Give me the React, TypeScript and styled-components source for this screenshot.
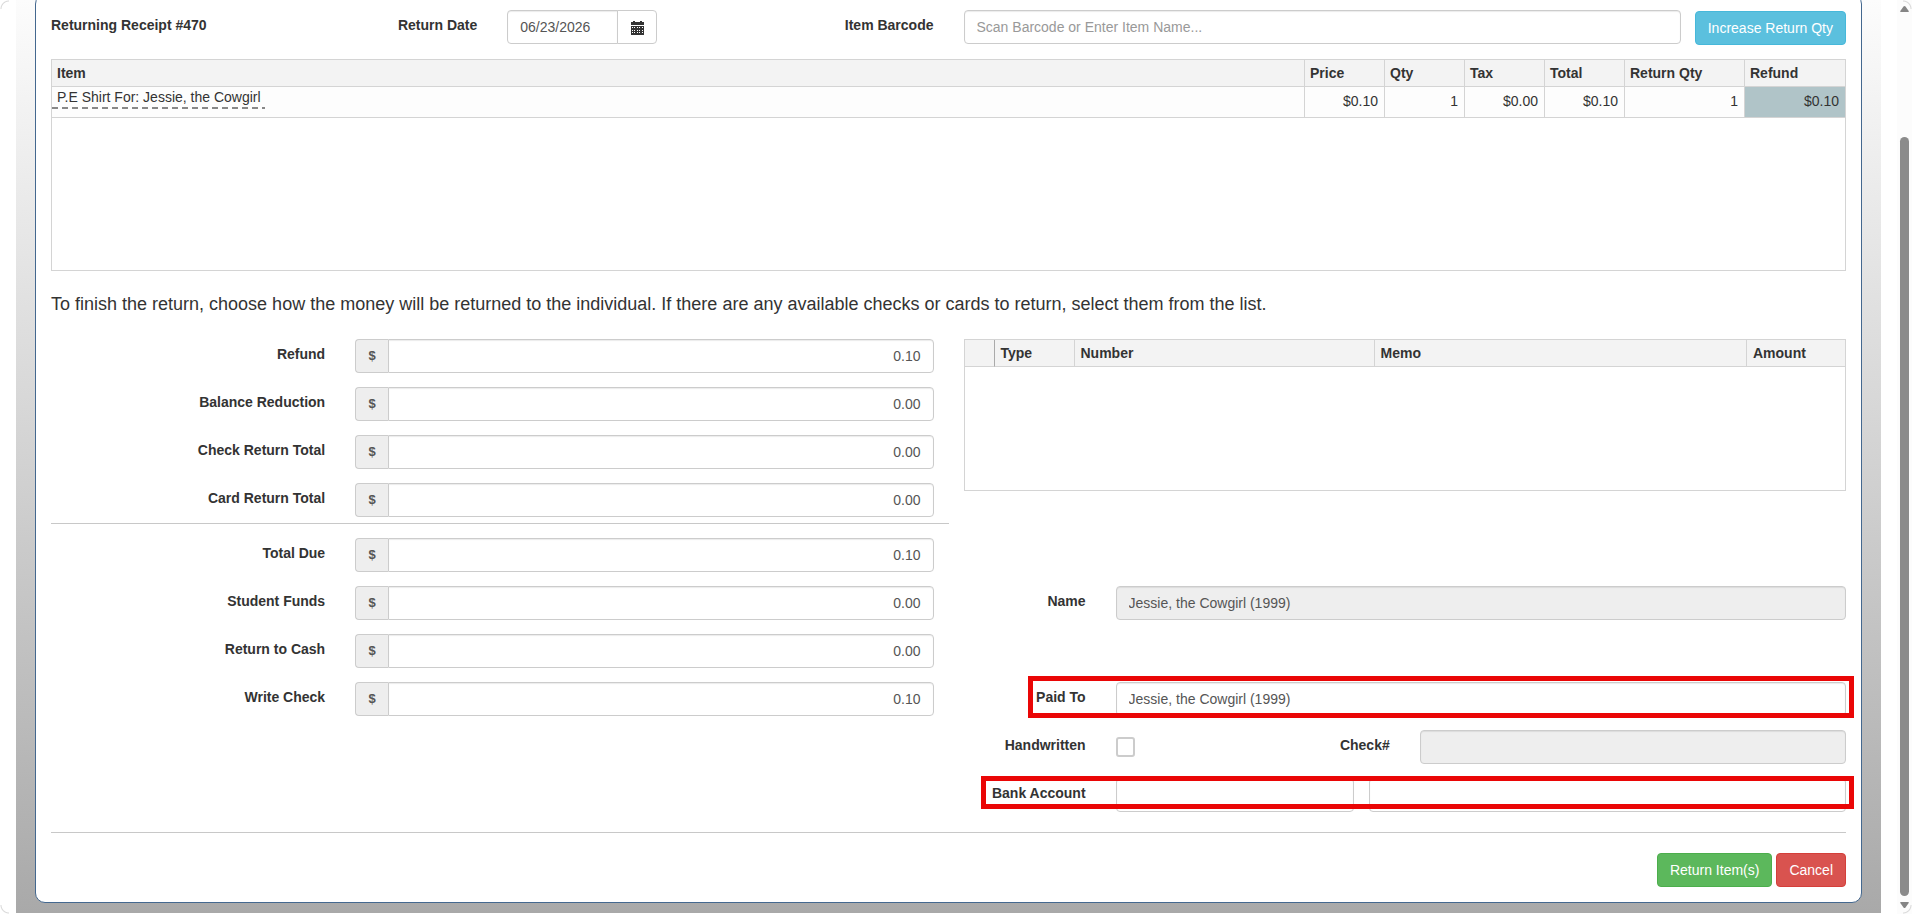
import React from "react";
import styled, { createGlobalStyle, css } from "styled-components";

const GlobalStyle = createGlobalStyle`
  * { box-sizing: border-box; }
  body {
    margin: 0;
    background: #fff;
    color: #333;
    font-family: "Liberation Sans", Arial, sans-serif;
    font-size: 14px;
    line-height: 20px;
  }
  input, button { font: inherit; }
`;

const corner = (x: string, y: string) =>
  `radial-gradient(circle at ${x} ${y}, transparent 7px, #d8d8d8 8px, transparent 9px) no-repeat`;

const Shell = styled.div`
  position: relative;
  display: flex;
  min-height: 100vh;
  overflow: hidden;
  &::after {
    content: "";
    position: absolute;
    inset: 0;
    pointer-events: none;
    background:
      ${corner("9px", "9px")} 0 0 / 9px 9px,
      ${corner("0", "9px")} 100% 0 / 9px 9px,
      ${corner("9px", "0")} 0 100% / 9px 9px,
      ${corner("0", "0")} 100% 100% / 9px 9px;
  }
`;

const Backdrop = styled.div`
  flex: 1;
  min-width: 0;
  margin: 0 16px 1px;
  padding: 0 19px 10px;
  background: linear-gradient(#fcfcfc, #a9a9a9);
`;

const Panel = styled.main`
  margin-top: -6px;
  padding: 15px 0;
  border: 1px solid #44688f;
  border-radius: 10px;
  background: #fff;
`;

const TopBar = styled.div`
  display: grid;
  grid-template-columns: 1fr 1fr 2fr 4fr;
  align-items: start;
`;

const BarCell = styled.div<{ $end?: boolean }>`
  display: flex;
  justify-content: ${(p) => (p.$end ? "flex-end" : "flex-start")};
  gap: 14px;
  padding: 0 15px;
  white-space: nowrap;
`;

const labelText = css`
  padding-top: 5px;
  font-weight: 700;
`;

const BarTitle = styled.strong`
  ${labelText}
`;

const Label = styled.label`
  ${labelText}
  text-align: right;
  white-space: nowrap;
`;

const BarcodeLabel = styled(Label)`
  flex: 1;
`;

const Input = styled.input`
  flex: 1;
  width: 100%;
  min-width: 0;
  height: 34px;
  padding: 6px 12px;
  border: 1px solid #ccc;
  border-radius: 4px;
  background: #fff;
  box-shadow: inset 0 1px 1px rgba(0, 0, 0, 0.08);
  color: #555;
  outline: 0;
  &::placeholder { color: #999; opacity: 1; }
  &:disabled { background: #eee; }
`;

const DateGroup = styled.div`
  display: flex;
  width: 150px;
  ${Input} { border-radius: 4px 0 0 4px; }
`;

const DateButton = styled.button`
  display: flex;
  align-items: center;
  justify-content: center;
  width: 40px;
  height: 34px;
  margin-left: -1px;
  padding: 2px 0 0;
  border: 1px solid #ccc;
  border-radius: 0 4px 4px 0;
  background: #fff;
  color: #333;
`;

const tones = {
  info: ["#5bc0de", "#46b8da"],
  success: ["#5cb85c", "#4cae4c"],
  danger: ["#d9534f", "#d43f3a"],
};

const Button = styled.button<{ $tone: keyof typeof tones }>`
  height: 34px;
  padding: 6px 12px;
  border: 1px solid ${(p) => tones[p.$tone][1]};
  border-radius: 4px;
  background: ${(p) => tones[p.$tone][0]};
  color: #fff;
  white-space: nowrap;
`;

const IncreaseButton = styled(Button)`
  margin-top: 1px;
`;

const GridBox = styled.div<{ $height: number }>`
  min-height: ${(p) => p.$height}px;
  border: 1px solid #d4d4d4;
`;

const Table = styled.table<{ $inset?: number }>`
  width: 100%;
  table-layout: fixed;
  border-collapse: separate;
  border-spacing: 0;
  th { padding: 0 ${(p) => p.$inset ?? 5}px; }
`;

const Th = styled.th<{ $w?: number; $dark?: boolean }>`
  ${(p) => p.$w && `width: ${p.$w}px;`}
  height: 27px;
  border-right: 1px solid ${(p) => (p.$dark ? "#aaa" : "#d4d4d4")};
  border-bottom: 1px solid #d4d4d4;
  background: #f3f3f3;
  text-align: left;
  &:last-child { border-right: 0; }
`;

const Td = styled.td<{ $mark?: boolean }>`
  height: 31px;
  padding: 0 6px 2px;
  border-right: 1px solid #d4d4d4;
  border-bottom: 1px solid #d4d4d4;
  background: ${(p) => (p.$mark ? "#b0c4c8" : "#fdfdfd")};
  text-align: right;
  &:last-child { border-right: 0; }
`;

const ItemTd = styled(Td)`
  padding: 0;
  text-align: left;
  vertical-align: top;
`;

const ItemName = styled.span`
  display: inline-block;
  padding: 0 4px 2px 5px;
  line-height: 19px;
  background: repeating-linear-gradient(90deg, #888 0 6px, transparent 6px 10px) left bottom / 100% 2px no-repeat;
`;

const ItemsArea = styled.section`
  margin: 14px 15px 0;
`;

const Note = styled.p`
  margin: 20px 15px 22px;
  font-size: 18px;
  line-height: 26px;
`;

const Halves = styled.div`
  display: grid;
  grid-template-columns: 1fr 1fr;
`;

const Stack = styled.div`
  display: flex;
  flex-direction: column;
  gap: 14px;
`;

const AmountRow = styled.div`
  display: grid;
  grid-template-columns: 1fr 2fr;
  > * { margin: 0 15px; }
`;

const Money = styled.div`
  display: flex;
  ${Input} {
    border-radius: 0 4px 4px 0;
    text-align: right;
  }
`;

const Currency = styled.span`
  width: 33px;
  padding: 6px 0;
  border: 1px solid #ccc;
  border-right: 0;
  border-radius: 4px 0 0 4px;
  background: #eee;
  color: #555;
  font-size: 13px;
  font-weight: 700;
  text-align: center;
`;

const Rule = styled.hr<{ $kind: "half" | "full" }>`
  height: 0;
  border: 0;
  border-top: 1px solid #c8c8c8;
  margin: ${(p) => (p.$kind === "half" ? "6px 0 14px 15px" : "20px 15px")};
`;

const PayColumn = styled.div`
  display: flex;
  flex-direction: column;
`;

const ChecksArea = styled.section`
  margin: 0 15px 95px;
`;

const PayRow = styled.div`
  position: relative;
  display: grid;
  grid-template-columns: 1fr 5fr;
  min-height: 34px;
  > * { margin: 0 15px; }
`;

const Spacer = styled.div`
  height: 34px;
`;

const CheckRow = styled.div`
  display: grid;
  grid-template-columns: 1fr 1fr 1fr 3fr;
  > * { margin: 0 15px; }
`;

const PayInput = styled(Input)`
  width: auto;
`;

const Tick = styled.input`
  appearance: none;
  width: 19px;
  height: 20px;
  margin: 7px 0 0;
  border: 2px solid #ccc;
  border-radius: 3px;
  background: #fff;
`;

const TickCell = styled.div`
  display: flex;
  align-items: flex-start;
`;

const BankFields = styled.div`
  display: grid;
  grid-template-columns: 1fr 2fr;
  gap: 15px;
`;

const Highlight = styled.div<{ $area: "payee" | "bank" }>`
  position: absolute;
  right: 7px;
  margin: 0;
  border: 5px solid #ea0606;
  pointer-events: none;
  ${(p) =>
    p.$area === "payee"
      ? "top: -6px; left: 79px; height: 42px;"
      : "top: -2px; left: 32px; height: 33px;"}
`;

const Actions = styled.div`
  display: flex;
  justify-content: flex-end;
  gap: 4px;
  padding: 0 15px;
`;

const ScrollTrack = styled.div`
  display: flex;
  flex-direction: column;
  align-items: center;
  width: 15px;
  padding: 5px 0;
  background: #fcfcfc;
`;

const ScrollGap = styled.div`
  flex: 0 0 124px;
`;

const ScrollThumb = styled.div`
  flex: 1;
  width: 9px;
  margin-bottom: 5px;
  border-radius: 5px;
  background: #8b8b8b;
`;

const CalendarIcon = () => (
  <svg width="13" height="14" viewBox="0 0 13 14" aria-hidden="true">
    <path fill="currentColor" d="M0 1h2V0h2v1h5V0h2v1h2v3H0z" />
    <path fill="currentColor" d="M0 5h13v9H0z" />
    <g fill="#fff">
      {[6, 9, 11].map((y) =>
        [1, 3, 6, 8, 11].map((x) => <rect key={`${x}-${y}`} x={x} y={y} width="1" height="1" />)
      )}
    </g>
  </svg>
);

const Arrow = ({ down }: { down?: boolean }) => (
  <svg width="9" height="8" viewBox="0 0 9 8" aria-hidden="true">
    <path
      fill="#858585"
      d={down ? "M.8 1h7.400q1 0 .5 1L5.500 6.500q-1 1-2 0L.3 2Q-.2 1 .8 1z" : "M.8 7h7.400q1 0 .5-1L5.500 1.500q-1-1-2 0L.3 6Q-.2 7 .8 7z"}
    />
  </svg>
);

type Amount = { id: string; label: string; value: string };

const returned: Amount[] = [
  { id: "refund", label: "Refund", value: "0.10" },
  { id: "balance", label: "Balance Reduction", value: "0.00" },
  { id: "checks", label: "Check Return Total", value: "0.00" },
  { id: "cards", label: "Card Return Total", value: "0.00" },
];

const due: Amount[] = [
  { id: "due", label: "Total Due", value: "0.10" },
  { id: "funds", label: "Student Funds", value: "0.00" },
  { id: "cash", label: "Return to Cash", value: "0.00" },
  { id: "write", label: "Write Check", value: "0.10" },
];

const Amounts = ({ items }: { items: Amount[] }) => (
  <Stack>
    {items.map((a) => (
      <AmountRow key={a.id}>
        <Label htmlFor={a.id}>{a.label}</Label>
        <Money>
          <Currency>$</Currency>
          <Input id={a.id} defaultValue={a.value} />
        </Money>
      </AmountRow>
    ))}
  </Stack>
);

export default function App() {
  return (
    <Shell>
      <GlobalStyle />
      <Backdrop>
        <Panel>
          <TopBar>
            <BarCell>
              <BarTitle>Returning Receipt #470</BarTitle>
            </BarCell>
            <BarCell $end>
              <Label htmlFor="date">Return Date</Label>
            </BarCell>
            <BarCell>
              <DateGroup>
                <Input id="date" defaultValue="06/23/2026" />
                <DateButton type="button" aria-label="Choose date">
                  <CalendarIcon />
                </DateButton>
              </DateGroup>
              <BarcodeLabel htmlFor="barcode">Item Barcode</BarcodeLabel>
            </BarCell>
            <BarCell>
              <Input id="barcode" placeholder="Scan Barcode or Enter Item Name..." />
              <IncreaseButton type="button" $tone="info">Increase Return Qty</IncreaseButton>
            </BarCell>
          </TopBar>

          <ItemsArea>
            <GridBox $height={212}>
              <Table>
                <thead>
                  <tr>
                    <Th>Item</Th>
                    <Th $w={80}>Price</Th>
                    <Th $w={80}>Qty</Th>
                    <Th $w={80}>Tax</Th>
                    <Th $w={80}>Total</Th>
                    <Th $w={120}>Return Qty</Th>
                    <Th $w={100}>Refund</Th>
                  </tr>
                </thead>
                <tbody>
                  <tr>
                    <ItemTd><ItemName>P.E Shirt For: Jessie, the Cowgirl</ItemName></ItemTd>
                    <Td>$0.10</Td>
                    <Td>1</Td>
                    <Td>$0.00</Td>
                    <Td>$0.10</Td>
                    <Td>1</Td>
                    <Td $mark>$0.10</Td>
                  </tr>
                </tbody>
              </Table>
            </GridBox>
          </ItemsArea>

          <Note>
            To finish the return, choose how the money will be returned to the individual. If there are any available checks or cards to return, select them from the list.
          </Note>

          <Halves>
            <div>
              <Amounts items={returned} />
              <Rule $kind="half" />
              <Amounts items={due} />
            </div>
            <PayColumn>
              <ChecksArea>
                <GridBox $height={152}>
                  <Table $inset={6}>
                    <thead>
                      <tr>
                        <Th $w={30} $dark aria-label="Select" />
                        <Th $w={80}>Type</Th>
                        <Th $w={300}>Number</Th>
                        <Th>Memo</Th>
                        <Th $w={98}>Amount</Th>
                      </tr>
                    </thead>
                  </Table>
                </GridBox>
              </ChecksArea>
              <Stack>
                <PayRow>
                  <Label htmlFor="name">Name</Label>
                  <PayInput id="name" disabled defaultValue="Jessie, the Cowgirl (1999)" />
                </PayRow>
                <Spacer />
                <PayRow>
                  <Label htmlFor="payee">Paid To</Label>
                  <PayInput id="payee" defaultValue="Jessie, the Cowgirl (1999)" />
                  <Highlight $area="payee" />
                </PayRow>
                <CheckRow>
                  <Label htmlFor="hand">Handwritten</Label>
                  <TickCell><Tick id="hand" type="checkbox" /></TickCell>
                  <Label htmlFor="checkno">Check#</Label>
                  <PayInput id="checkno" disabled />
                </CheckRow>
                <PayRow>
                  <Label htmlFor="bank">Bank Account</Label>
                  <BankFields>
                    <Input id="bank" />
                    <Input aria-label="Bank account name" />
                  </BankFields>
                  <Highlight $area="bank" />
                </PayRow>
              </Stack>
            </PayColumn>
          </Halves>

          <Rule $kind="full" />

          <Actions>
            <Button type="button" $tone="success">Return Item(s)</Button>
            <Button type="button" $tone="danger">Cancel</Button>
          </Actions>
        </Panel>
      </Backdrop>
      <ScrollTrack aria-hidden="true">
        <Arrow />
        <ScrollGap />
        <ScrollThumb />
        <Arrow down />
      </ScrollTrack>
    </Shell>
  );
}
